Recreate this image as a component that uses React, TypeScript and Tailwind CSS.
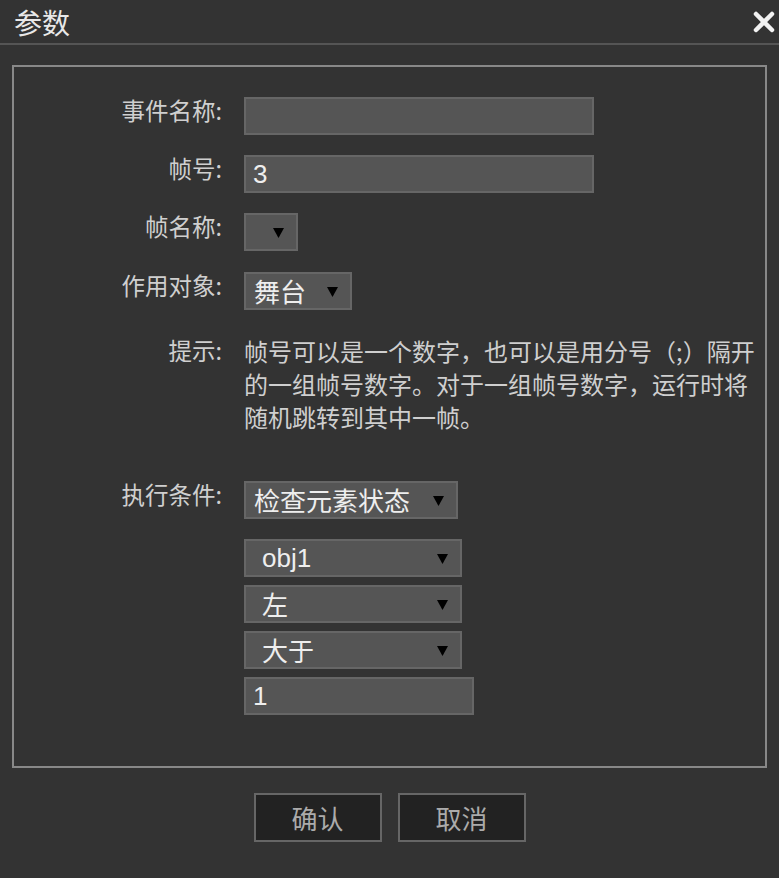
import type { ReactNode } from 'react';

const cjk = "font-['Noto_Sans_CJK_SC','Noto_Sans',sans-serif]";
const latin = "font-['Liberation_Sans','Noto_Sans_CJK_SC',sans-serif]";

function Arrow() {
  return (
    <svg width="11" height="11" viewBox="0 0 11 11" className="shrink-0">
      <polygon points="0,1 11,1 5.5,11" fill="#000" />
    </svg>
  );
}

function Row({ label, children, className = '' }: { label: string; children: ReactNode; className?: string }) {
  return (
    <div className={`flex items-start ${className}`}>
      <div className="w-[208px] shrink-0 text-right text-[23.5px] leading-[26px] text-[#cfcfcf]">{label}</div>
      <div className="ml-[22px]">{children}</div>
    </div>
  );
}

function TextBox({ value, width }: { value?: string; width: string }) {
  return (
    <div className={`${width} h-[38px] border-2 border-[#666] bg-[#555] flex items-center pl-[7px] ${latin} text-[26px] text-[#eeeeee]`}>
      {value}
    </div>
  );
}

function Select({ value, width, pad = 'pl-[8px]' }: { value?: string; width: string; pad?: string }) {
  return (
    <div
      className={`${width} h-[38px] border-2 border-[#666] bg-[#555] flex items-center ${pad} pr-[12px] ${
        value ? 'justify-between' : 'justify-end'
      } text-[26px] text-[#eeeeee]`}
    >
      {value && <span className="leading-none">{value}</span>}
      <Arrow />
    </div>
  );
}

export default function App() {
  return (
    <div className={`w-[779px] h-[878px] bg-[#333333] ${cjk} overflow-hidden`}>
      <div className="h-[45px] border-b-2 border-[#555] flex items-center justify-between pl-[14px] pr-[4px]">
        <span className="text-[28px] text-[#e8e8e8] leading-none">参数</span>
        <svg width="22" height="22" viewBox="0 0 22 22">
          <path d="M3 3 L19 19 M19 3 L3 19" stroke="#f2f2f2" strokeWidth="4.5" strokeLinecap="round" />
        </svg>
      </div>

      <div className="mx-[12px] mt-[20px] h-[703px] border-2 border-[#888] pt-[30px] flex flex-col">
        <Row label="事件名称:">
          <TextBox width="w-[350px]" />
        </Row>
        <Row label="帧号:" className="mt-[20px]">
          <TextBox width="w-[350px]" value="3" />
        </Row>
        <Row label="帧名称:" className="mt-[20px]">
          <Select width="w-[54px]" />
        </Row>
        <Row label="作用对象:" className="mt-[21px]">
          <Select value="舞台" width="w-[108px]" />
        </Row>

        <div className="flex items-start mt-[24px] text-[#cfcfcf]">
          <div className="w-[208px] shrink-0 text-right text-[23.5px] leading-[33px]">提示:</div>
          <div className="ml-[22px] w-[516px] text-[24px] leading-[33px]">
            帧号可以是一个数字，也可以是用分号（;）隔开的一组帧号数字。对于一组帧号数字，运行时将随机跳转到其中一帧。
          </div>
        </div>

        <Row label="执行条件:" className="mt-[48px]">
          <Select value="检查元素状态" width="w-[214px]" />
          <div className="mt-[20px] flex flex-col gap-[8px]">
            <div className={latin}>
              <Select value="obj1" width="w-[218px]" pad="pl-[16px]" />
            </div>
            <Select value="左" width="w-[218px]" pad="pl-[16px]" />
            <Select value="大于" width="w-[218px]" pad="pl-[16px]" />
            <TextBox width="w-[230px]" value="1" />
          </div>
        </Row>
      </div>

      <div className="mt-[25px] flex justify-center gap-[16px]">
        <button className="w-[128px] h-[49px] border-2 border-[#666] bg-[#222] text-[26px] text-[#ababab]">确认</button>
        <button className="w-[128px] h-[49px] border-2 border-[#666] bg-[#222] text-[26px] text-[#ababab]">取消</button>
      </div>
    </div>
  );
}
